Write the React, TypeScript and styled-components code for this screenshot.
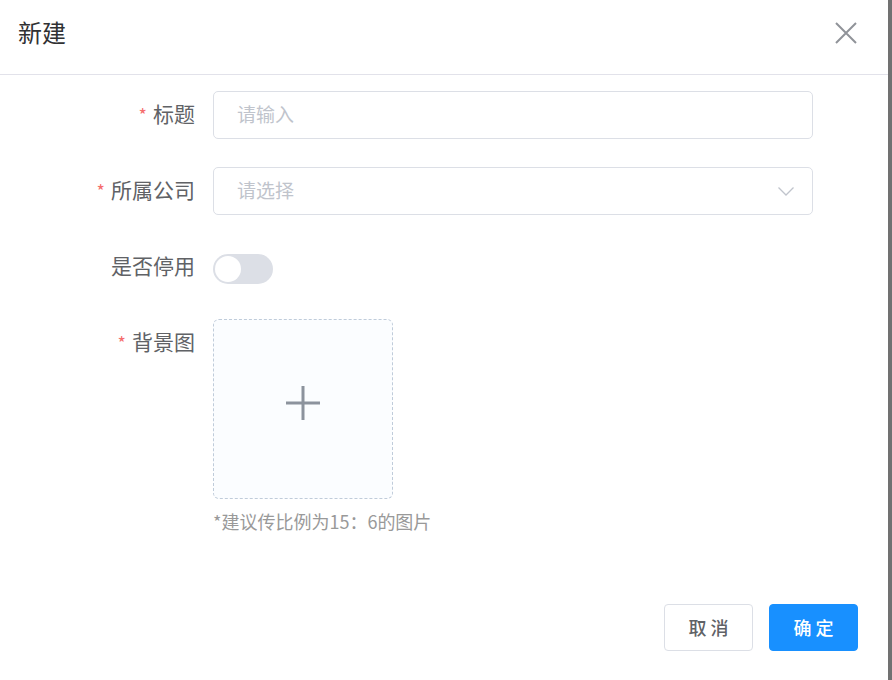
import React from "react";
import styled, { createGlobalStyle } from "styled-components";

const GlobalStyle = createGlobalStyle`
  html, body {
    margin: 0;
    padding: 0;
    background: #717171;
    font-family: "Noto Sans CJK SC", "Noto Sans", "Liberation Sans", sans-serif;
  }
  * { box-sizing: border-box; }
`;

const Dialog = styled.div`
  width: 888px;
  min-height: 680px;
  background: #ffffff;
  display: flex;
  flex-direction: column;
`;

const Header = styled.div`
  height: 75px;
  display: flex;
  align-items: center;
  justify-content: space-between;
  padding: 0 31px 8px 18px;
  border-bottom: 1px solid #e2e2ea;
`;

const Title = styled.div`
  font-size: 24px;
  line-height: 34px;
  margin-top: -2px;
  color: #303133;
`;

const CloseButton = styled.button`
  width: 22px;
  height: 22px;
  padding: 0;
  border: none;
  background: transparent;
  display: flex;
  align-items: center;
  justify-content: center;
  cursor: pointer;
`;

const Body = styled.div`
  padding: 16px 75px 0 0;
`;

const FormItem = styled.div<{ $mb?: number }>`
  display: flex;
  margin-bottom: ${(p) => (p.$mb ?? 28)}px;
`;

const Label = styled.label`
  width: 213px;
  height: 48px;
  flex-shrink: 0;
  padding-right: 18px;
  text-align: right;
  font-size: 21px;
  line-height: 45px;
  color: #606266;
`;

const Star = styled.span`
  color: #f56c6c;
  font-size: 18px;
  line-height: 1;
  margin-right: 6px;
`;

const Control = styled.div`
  flex: 1;
  min-height: 48px;
  display: flex;
  flex-direction: column;
  align-items: flex-start;
  justify-content: center;
`;

const InputBox = styled.div`
  position: relative;
  width: 100%;
  height: 48px;
  border: 1px solid #dcdfe6;
  border-radius: 5px;
  display: flex;
  align-items: center;
  padding: 0 18px 0 23px;
`;

const Placeholder = styled.span`
  flex: 1;
  font-size: 19px;
  line-height: 26px;
  margin-top: -2px;
  color: #c0c4cc;
`;

const Switch = styled.div<{ $on?: boolean }>`
  width: 60px;
  height: 30px;
  margin-top: 3px;
  border-radius: 15px;
  background: ${(p) => (p.$on ? "#1890ff" : "#dcdfe6")};
  padding: 2px;
  display: flex;
`;

const Knob = styled.div`
  width: 26px;
  height: 26px;
  border-radius: 50%;
  background: #ffffff;
`;

const Upload = styled.div`
  width: 180px;
  height: 180px;
  border: 1px dashed #c0ccda;
  border-radius: 6px;
  background: #fbfdff;
  display: flex;
  align-items: flex-start;
  justify-content: center;
  padding-top: 65px;
`;

const Hint = styled.div`
  margin-top: 9px;
  font-size: 18px;
  line-height: 26px;
  color: #999999;
`;

const Footer = styled.div`
  display: flex;
  justify-content: flex-end;
  gap: 16px;
  padding: 70px 30px 0 0;
`;

const Button = styled.button<{ $primary?: boolean }>`
  width: 89px;
  height: 47px;
  border-radius: 4px;
  border: 1px solid ${(p) => (p.$primary ? "#1890ff" : "#dcdfe6")};
  background: ${(p) => (p.$primary ? "#1890ff" : "#ffffff")};
  color: ${(p) => (p.$primary ? "#ffffff" : "#606266")};
  font-family: "Noto Sans CJK SC", sans-serif;
  font-size: 18px;
  font-weight: 500;
  padding: 0 0 2px;
  cursor: pointer;
`;

export default function App() {
  return (
    <>
      <GlobalStyle />
      <Dialog>
        <Header>
          <Title>新建</Title>
          <CloseButton aria-label="close">
            <svg width="22" height="22" viewBox="0 0 22 22">
              <path d="M1 1 L21 21 M21 1 L1 21" stroke="#909399" strokeWidth="2" fill="none" />
            </svg>
          </CloseButton>
        </Header>
        <Body>
          <FormItem>
            <Label>
              <Star>*</Star>标题
            </Label>
            <Control>
              <InputBox>
                <Placeholder>请输入</Placeholder>
              </InputBox>
            </Control>
          </FormItem>
          <FormItem>
            <Label>
              <Star>*</Star>所属公司
            </Label>
            <Control>
              <InputBox>
                <Placeholder>请选择</Placeholder>
                <svg width="16" height="9" viewBox="0 0 16 9">
                  <path d="M0.5 0.5 L8 8 L15.5 0.5" stroke="#c0c4cc" strokeWidth="1.3" fill="none" />
                </svg>
              </InputBox>
            </Control>
          </FormItem>
          <FormItem>
            <Label>是否停用</Label>
            <Control>
              <Switch>
                <Knob />
              </Switch>
            </Control>
          </FormItem>
          <FormItem $mb={0}>
            <Label>
              <Star>*</Star>背景图
            </Label>
            <Control>
              <Upload>
                <svg width="36" height="36" viewBox="0 0 36 36">
                  <path d="M18 1 V35 M1 18 H35" stroke="#8c939d" strokeWidth="3" fill="none" />
                </svg>
              </Upload>
              <Hint>*建议传比例为15：6的图片</Hint>
            </Control>
          </FormItem>
        </Body>
        <Footer>
          <Button>取 消</Button>
          <Button $primary>确 定</Button>
        </Footer>
      </Dialog>
    </>
  );
}
